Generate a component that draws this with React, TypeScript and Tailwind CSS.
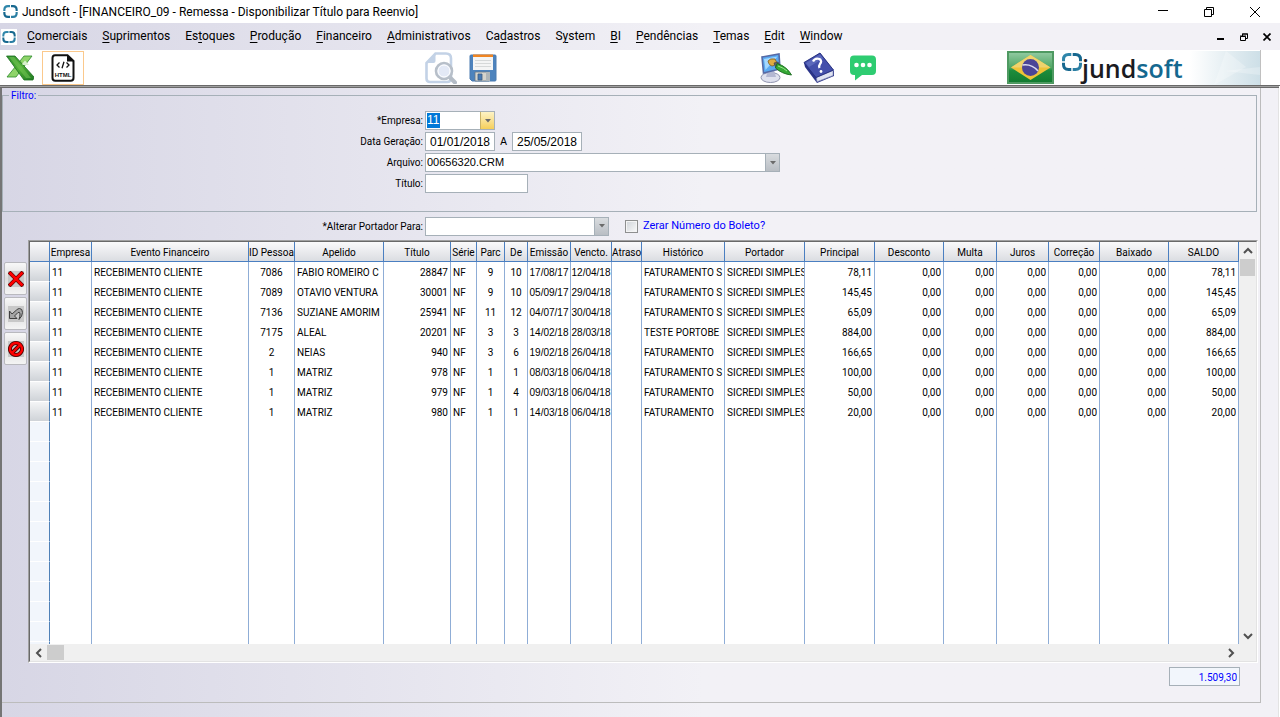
import { useState } from "react";
import type { ReactNode } from "react";

type Align = "left" | "center" | "right";

const alignClass: Record<Align, string> = {
  left: "pl-[2px] text-left",
  center: "text-center",
  right: "px-[2px] text-right",
};

const columns: { title: string; width: string; align: Align; date?: boolean }[] = [
  { title: "Empresa", width: "w-[42px]", align: "left" },
  { title: "Evento Financeiro", width: "w-[157px]", align: "left" },
  { title: "ID Pessoa", width: "w-[46px]", align: "center" },
  { title: "Apelido", width: "w-[89px]", align: "left" },
  { title: "Título", width: "w-[67px]", align: "right" },
  { title: "Série", width: "w-[26px]", align: "left" },
  { title: "Parc", width: "w-[28px]", align: "center" },
  { title: "De", width: "w-[23px]", align: "center" },
  { title: "Emissão", width: "w-[43px]", align: "center", date: true },
  { title: "Vencto.", width: "w-[41px]", align: "center", date: true },
  { title: "Atraso", width: "w-[30px]", align: "left" },
  { title: "Histórico", width: "w-[83px]", align: "left" },
  { title: "Portador", width: "w-[80px]", align: "left" },
  { title: "Principal", width: "w-[70px]", align: "right" },
  { title: "Desconto", width: "w-[69px]", align: "right" },
  { title: "Multa", width: "w-[53px]", align: "right" },
  { title: "Juros", width: "w-[52px]", align: "right" },
  { title: "Correção", width: "w-[51px]", align: "right" },
  { title: "Baixado", width: "w-[69px]", align: "right" },
  { title: "SALDO", width: "w-[70px]", align: "right" },
];

const titulos = [
  ["7086", "FABIO ROMEIRO C", "28847", "9", "10", "17/08/17", "12/04/18", "FATURAMENTO S", "78,11"],
  ["7089", "OTAVIO VENTURA", "30001", "9", "10", "05/09/17", "29/04/18", "FATURAMENTO S", "145,45"],
  ["7136", "SUZIANE AMORIM", "25941", "11", "12", "04/07/17", "30/04/18", "FATURAMENTO S", "65,09"],
  ["7175", "ALEAL", "20201", "3", "3", "14/02/18", "28/03/18", "TESTE PORTOBE", "884,00"],
  ["2", "NEIAS", "940", "3", "6", "19/02/18", "26/04/18", "FATURAMENTO", "166,65"],
  ["1", "MATRIZ", "978", "1", "1", "08/03/18", "06/04/18", "FATURAMENTO S", "100,00"],
  ["1", "MATRIZ", "979", "1", "4", "09/03/18", "06/04/18", "FATURAMENTO", "50,00"],
  ["1", "MATRIZ", "980", "1", "1", "14/03/18", "06/04/18", "FATURAMENTO", "20,00"],
];

const rows = titulos.map(([id, apelido, titulo, parc, de, emissao, vencto, historico, valor]) => [
  "11", "RECEBIMENTO CLIENTE", id, apelido, titulo, "NF", parc, de, emissao, vencto, "",
  historico, "SICREDI SIMPLES", valor, "0,00", "0,00", "0,00", "0,00", "0,00", valor,
]);

const emptyRows = Array.from({ length: 40 });

// [before, hotkey, after]
const menus = [
  ["", "C", "omerciais"],
  ["", "S", "uprimentos"],
  ["Es", "t", "oques"],
  ["", "P", "rodução"],
  ["", "F", "inanceiro"],
  ["", "A", "dministrativos"],
  ["Ca", "d", "astros"],
  ["S", "y", "stem"],
  ["", "B", "I"],
  ["", "P", "endências"],
  ["", "T", "emas"],
  ["", "E", "dit"],
  ["", "W", "indow"],
];

function LogoMark({ className }: { className: string }) {
  return (
    <svg viewBox="0 0 20 18" className={className} fill="none" strokeWidth="3">
      <path d="M9.300 1.500H6.500Q1.500 1.500 1.500 6.500V8.300" stroke="#2f86aa" />
      <path d="M10.700 1.500H13.500Q18.500 1.500 18.500 6.500V8.300" stroke="#17688f" />
      <path d="M9.300 16.500H6.500Q1.500 16.500 1.500 11.500V9.700" stroke="#17688f" />
      <path d="M10.700 16.500H13.500Q18.500 16.500 18.500 11.500V9.700" stroke="#2a7ea3" />
    </svg>
  );
}

function ExcelIcon() {
  return (
    <svg viewBox="0 0 28 26" className="h-[26px] w-7">
      <defs>
        <linearGradient id="xl" x1="0" y1="0" x2="1" y2="1">
          <stop offset="0" stopColor="#2f8f2f" />
          <stop offset="0.5" stopColor="#4fae35" />
          <stop offset="1" stopColor="#1f7a22" />
        </linearGradient>
      </defs>
      <path d="M18 1h8L10 22H1Z" fill="#8fd46a" stroke="#2b8a2b" strokeWidth="0.8" />
      <path d="M0.5 1H9L28 22l-1 3H18Z" fill="url(#xl)" stroke="#1b6e20" strokeWidth="0.8" />
      <path d="M3 2h5l17 21h-5Z" fill="#7cc95a" opacity="0.5" />
      <path d="M16 9l3-3.500 4 4.500h-6Z" fill="#d8f0cc" />
    </svg>
  );
}

function HtmlIcon() {
  return (
    <svg viewBox="0 0 24 28" className="h-7 w-6">
      <path d="M4 1.200H16.500L22.500 7V24q0 2.800-2.800 2.800H4.300Q1.500 26.800 1.500 24V4Q1.500 1.200 4 1.200Z" fill="#fff" stroke="#111" strokeWidth="2" />
      <path d="M16 1v6.500h6.500Z" fill="#111" />
      <path d="M8.500 8.500 6 11l2.500 2.500M15.500 8.500 18 11l-2.500 2.500M13 7.800l-2 6.400" fill="none" stroke="#111" strokeWidth="1.300" />
      <text x="12" y="22.500" textAnchor="middle" fontSize="6" fontWeight="700" fontFamily="Liberation Sans, sans-serif" fill="#111">
        HTML
      </text>
    </svg>
  );
}

function PreviewIcon() {
  return (
    <svg viewBox="0 0 32 32" className="size-8">
      <path d="M10.500 1.500H21q5 0 5 5V26q0 4-4 4H5q-3.500 0-3.500-3.500V11Z" fill="#fff" stroke="#c3d2e6" strokeWidth="2.600" />
      <path d="M1 11 10.500 1v8q0 2-2 2Z" fill="#c3d2e6" />
      <path d="m24.500 25 5.500 5.500" stroke="#b4bcc6" strokeWidth="4" strokeLinecap="round" />
      <circle cx="19" cy="19" r="8" fill="#e3e9f6" stroke="#b7bfc9" strokeWidth="2.600" />
      <circle cx="19" cy="19" r="6" fill="none" stroke="#fff" strokeWidth="1" />
    </svg>
  );
}

function SaveIcon() {
  return (
    <svg viewBox="0 0 28 28" className="size-7">
      <path d="M1 2q0-1 1-1H26q1 0 1 1V26q0 1-1 1H3l-2-2Z" fill="#4d83bd" stroke="#4a7ab0" />
      <path d="M4 1h20v15H4Z" fill="#f4f5f5" />
      <path d="M4 0.500h20v2.500H4Z" fill="#f08522" />
      <path d="M6 6.500h16M6 9.500h16M6 12.500h16" stroke="#d6d9d9" />
      <path d="M6 18h14v9H6Z" fill="#d4d3cc" stroke="#62768c" strokeWidth="0.800" />
      <path d="M9 20h4v6H9Z" fill="#4679b4" stroke="#3b5d84" strokeWidth="0.800" />
      <path d="M17 18h4v9h-4Z" fill="#aeb5b8" />
    </svg>
  );
}

function ThemeIcon() {
  return (
    <svg viewBox="0 0 32 30" className="h-[30px] w-8">
      <ellipse cx="10.500" cy="24.500" rx="9.500" ry="5" fill="#dfe1ee" stroke="#8f93ae" />
      <path d="M8 17h6l2 7H6Z" fill="#b4b8d2" />
      <path d="M2 4 19 1l1 15L3.500 20Z" fill="#5aaaf2" stroke="#566aa6" strokeWidth="1.600" />
      <path d="M4 6 17.500 3.500 5.500 17Z" fill="#a4d8ff" />
      <path d="M8 8q2-3 7-2l2 4-4 3q-4 0-5-5Z" fill="#e0ad42" stroke="#7e5a22" strokeWidth="0.800" />
      <path d="m14 10 4-1 2 4-4 2Z" fill="#5f6270" stroke="#444" strokeWidth="0.700" />
      <path d="M17 10.500Q27 13.500 31.500 22 22 21 15.500 15Z" fill="#35a835" stroke="#176a1c" strokeWidth="0.900" />
      <path d="M18 13q6 2 9 5" stroke="#9be88d" fill="none" />
    </svg>
  );
}

function HelpIcon() {
  return (
    <svg viewBox="0 0 32 32" className="size-8">
      <path d="M1 11 2 15 14 31 31 24V19L17 1Z" fill="#2a3389" />
      <path d="M13.500 25.500 30 18.500v5L14 29.800Z" fill="#dfe3f2" stroke="#8990b8" strokeWidth="0.700" />
      <path d="M1 10.500 17 1 30.500 18 13 25.500Z" fill="#4450ab" stroke="#26307e" strokeWidth="0.900" />
      <path d="M3 11 17 2.500l3 4L6 15Z" fill="#6d79c8" opacity="0.600" />
      <path d="M10 9.500q2-4 6.500-2.500 3 2 0.500 5-1.500 2-0.500 4" fill="none" stroke="#fff" strokeWidth="2.300" />
      <circle cx="18" cy="19.500" r="1.400" fill="#fff" />
    </svg>
  );
}

function ChatIcon() {
  return (
    <svg viewBox="0 0 26 26" className="size-[26px]">
      <path d="M4 0.500H22q4 0 4 4V16q0 4-4 4H12L5 25.500V20H4q-4 0-4-4V4.500Q0 0.500 4 0.500Z" fill="#2ecc71" />
      <circle cx="6.500" cy="10" r="2.300" fill="#fff" />
      <circle cx="13" cy="10" r="2.300" fill="#fff" />
      <circle cx="19.500" cy="10" r="2.300" fill="#fff" />
    </svg>
  );
}

function BrazilFlag() {
  return (
    <svg viewBox="0 0 47 33" className="h-[33px] w-[47px]">
      <defs>
        <linearGradient id="flag" x1="0" y1="0" x2="0" y2="1">
          <stop offset="0" stopColor="#93cba3" />
          <stop offset="0.500" stopColor="#4fa765" />
          <stop offset="0.600" stopColor="#1d8c3c" />
          <stop offset="1" stopColor="#117a30" />
        </linearGradient>
      </defs>
      <path d="M1 1h45v31H1Z" fill="url(#flag)" stroke="#4f9a62" strokeWidth="2" />
      <path d="M23.500 4 43.500 16.500 23.500 29 4 16.500Z" fill="#eec338" />
      <path d="M23.500 4 43.500 16.500H4Z" fill="#efd36d" />
      <circle cx="23.500" cy="16.500" r="8.500" fill="#4b4597" />
      <path d="M15.500 14q9-1.500 15.500 6" stroke="#dcdcf0" strokeWidth="1.500" fill="none" />
    </svg>
  );
}

function Chevron({ d }: { d: string }) {
  return (
    <svg viewBox="0 0 10 10" className="size-[10px]" fill="none" stroke="#505050" strokeWidth="2">
      <path d={d} />
    </svg>
  );
}

function ComboArrow({ hot = false }: { hot?: boolean }) {
  return (
    <span
      className={`flex w-[14px] shrink-0 items-center justify-center self-stretch border-l ${
        hot
          ? "border-[#c9b36a] bg-linear-to-b from-[#fdf3c4] to-[#f5cf58]"
          : "border-[#a6b0b8] bg-linear-to-b from-[#d9dcdf] to-[#b9bec4]"
      }`}
    >
      <svg viewBox="0 0 6 4" className="h-1 w-[6px]">
        <path d="M0 0h6L3 3.500Z" fill="#6b6b6b" />
      </svg>
    </span>
  );
}

function ToolButton({ label, className = "", children }: { label: string; className?: string; children: ReactNode }) {
  return (
    <button type="button" aria-label={label} className={`flex shrink-0 items-center justify-center ${className}`}>
      {children}
    </button>
  );
}

function SideButton({ label, children }: { label: string; children: ReactNode }) {
  return (
    <button
      type="button"
      aria-label={label}
      className="flex h-[33px] w-[23px] items-center justify-center rounded-[2px] border border-[#b9b9be] bg-linear-to-b from-[#f8f8f8] via-[#dedede] to-[#f4f4f4]"
    >
      <span className="flex size-4 items-center justify-center bg-[#c8c8c8]">{children}</span>
    </button>
  );
}

const field = "h-[19px] border border-[#a6b0b8] bg-white";
const label = "pr-[2px] text-right font-['Roboto','Liberation_Sans',sans-serif] text-[10px] leading-[19px]";

function Filtro() {
  const [de, setDe] = useState("01/01/2018");
  const [ate, setAte] = useState("25/05/2018");
  const [titulo, setTitulo] = useState("");

  return (
    <fieldset className="mr-[3px] h-[124px] min-w-0 border border-[#a6b0b8]">
      <legend className="ml-[6px] h-[14px] px-[2px] font-['Roboto','Liberation_Sans',sans-serif] text-[10px] leading-[16px] text-[#0000ff]">
        Filtro:
      </legend>
      <div className="grid grid-cols-[422px_1fr] gap-y-[2px] pt-[9px]">
        <label htmlFor="empresa" className={label}>*Empresa:</label>
        <div className={`${field} flex w-[70px] items-center`}>
          <select
            id="empresa"
            className="ml-px h-[15px] w-[13px] appearance-none bg-[#0078d7] text-[12px] leading-[15px] text-white outline-none"
          >
            <option>11</option>
          </select>
          <span className="flex-1" />
          <ComboArrow hot />
        </div>

        <label htmlFor="de" className={label}>Data Geração:</label>
        <div className="flex items-center">
          <input id="de" value={de} onChange={(e) => setDe(e.target.value)} className={`${field} w-[70px] text-center text-[12px]`} />
          <label htmlFor="ate" className="w-[17px] text-center text-[10px]">A</label>
          <input id="ate" value={ate} onChange={(e) => setAte(e.target.value)} className={`${field} w-[70px] text-center text-[12px]`} />
        </div>

        <label htmlFor="arquivo" className={label}>Arquivo:</label>
        <div className={`${field} flex w-[355px]`}>
          <select id="arquivo" className="min-w-0 flex-1 appearance-none pl-px text-[11px] leading-[17px] outline-none">
            <option>00656320.CRM</option>
          </select>
          <ComboArrow />
        </div>

        <label htmlFor="titulo" className={label}>Título:</label>
        <input id="titulo" value={titulo} onChange={(e) => setTitulo(e.target.value)} className={`${field} w-[103px] px-1 text-[11px]`} />
      </div>
    </fieldset>
  );
}

function Grade() {
  return (
    <div className="flex min-h-0 min-w-0 flex-1 border border-t-[#a0a0a0] border-r-white border-b-white border-l-[#a0a0a0]">
      <div className="flex min-w-0 flex-1 flex-col border border-t-[#696969] border-r-[#e3e3e3] border-b-[#e3e3e3] border-l-[#696969] bg-white">
        <div className="flex min-h-0 flex-1">
          <div className="min-w-0 flex-1 overflow-hidden">
            <table className="w-full table-fixed border-separate border-spacing-0 font-['Roboto','Liberation_Sans',sans-serif] text-[10px] whitespace-nowrap">
              <thead>
                <tr className="h-5 bg-linear-to-b from-[#fafafb] to-[#d9dbe0]">
                  <th className="w-5 border-r border-b border-[#4a7fc1] p-0" />
                  {columns.map((c) => (
                    <th key={c.title} className={`${c.width} border-r border-b border-[#4a7fc1] p-0 text-center font-normal`}>
                      <div className="h-[19px] leading-[21px]">{c.title}</div>
                    </th>
                  ))}
                </tr>
              </thead>
              <tbody>
                {rows.map((row, i) => (
                  <tr key={i} className="h-5">
                    <td className="border-r border-b border-r-[#4f81b8] border-b-white bg-linear-to-b from-[#f4f5f6] to-[#cfd3d8] p-0" />
                    {row.map((value, j) => (
                      <td
                        key={j}
                        className={`border-r border-[#8fadd6] py-0 ${alignClass[columns[j].align]} ${
                          columns[j].date ? "font-['Liberation_Sans',sans-serif]" : ""
                        }`}
                      >
                        <div className="h-5 overflow-hidden leading-[22px]">{value}</div>
                      </td>
                    ))}
                  </tr>
                ))}
                {emptyRows.map((_, i) => (
                  <tr key={i} className="h-5">
                    <td className="border-r border-b border-r-[#4f81b8] border-b-white bg-[#f2f6fc] p-0" />
                    {columns.map((c) => (
                      <td key={c.title} className="border-r border-[#8fadd6] p-0" />
                    ))}
                  </tr>
                ))}
              </tbody>
            </table>
          </div>
          <div className="flex w-[17px] flex-col items-center bg-[#f0f0f0]">
            <button type="button" aria-label="Rolar para cima" className="flex h-[17px] items-center">
              <Chevron d="M1 7l4-4 4 4" />
            </button>
            <div className="h-[17px] w-[15px] bg-[#cdcdcd]" />
            <button type="button" aria-label="Rolar para baixo" className="mt-auto flex h-[17px] items-center">
              <Chevron d="M1 3l4 4 4-4" />
            </button>
          </div>
        </div>
        <div className="flex h-[17px] items-center bg-[#f0f0f0] pr-[17px]">
          <button type="button" aria-label="Rolar para a esquerda" className="flex w-[17px] justify-center">
            <Chevron d="M7 1L3 5l4 4" />
          </button>
          <div className="h-[15px] w-[17px] bg-[#cdcdcd]" />
          <button type="button" aria-label="Rolar para a direita" className="ml-auto flex w-[17px] justify-center">
            <Chevron d="M3 1l4 4-4 4" />
          </button>
        </div>
      </div>
    </div>
  );
}

export default function App() {
  const [zerar, setZerar] = useState(false);

  return (
    <div className="flex h-screen flex-col overflow-hidden bg-white font-['Liberation_Sans',sans-serif] text-black">
      <header className="flex h-[23px] shrink-0 items-center pl-[3px]">
        <LogoMark className="h-[13px] w-[15px]" />
        <h1 className="ml-1 flex-1 font-['Roboto','Noto_Sans',sans-serif] text-[12px]">
          Jundsoft - [FINANCEIRO_09 - Remessa - Disponibilizar Título para Reenvio]
        </h1>
        <div className="flex gap-9 pr-5">
          <button type="button" aria-label="Minimizar">
            <svg viewBox="0 0 10 10" className="size-[10px]" stroke="#000"><path d="M0 3.500h10" /></svg>
          </button>
          <button type="button" aria-label="Restaurar">
            <svg viewBox="0 0 10 10" className="size-[10px]" stroke="#000" fill="none">
              <path d="M0.500 2.500h7v7h-7ZM2.500 2.500v-2h7v7h-2" />
            </svg>
          </button>
          <button type="button" aria-label="Fechar">
            <svg viewBox="0 0 10 10" className="size-[10px]" stroke="#000"><path d="M0 0l10 10M10 0L0 10" /></svg>
          </button>
        </div>
      </header>

      <nav className="flex h-[27px] shrink-0 items-center bg-linear-to-r from-[#d7d6e5] to-[#f2f1f6] to-55% pl-px">
        <span className="bg-white px-px py-[2px]">
          <LogoMark className="h-3 w-[14px]" />
        </span>
        <ul className="ml-[10px] flex flex-1 gap-[15px] pb-px font-['Roboto','Noto_Sans',sans-serif] text-[12px]">
          {menus.map(([before, key, after]) => (
            <li key={before + key + after}>
              <a href="#">
                {before}
                <span className="underline underline-offset-2">{key}</span>
                {after}
              </a>
            </li>
          ))}
        </ul>
        <div className="flex items-center gap-[15px] pr-[9px]">
          <button type="button" aria-label="Minimizar janela">
            <svg viewBox="0 0 8 8" className="size-2" stroke="#000" strokeWidth="2"><path d="M0 6h7" /></svg>
          </button>
          <button type="button" aria-label="Restaurar janela">
            <svg viewBox="0 0 8 8" className="size-2" stroke="#000" fill="none">
              <path d="M0.500 3.500h5v4h-5ZM0 3h6M2.500 3V1h5v4.500H6M2 1h6" />
            </svg>
          </button>
          <button type="button" aria-label="Fechar janela">
            <svg viewBox="0 0 8 8" className="size-2" stroke="#000" strokeWidth="1.700"><path d="M0.500 0.500l7 7M7.500 0.500l-7 7" /></svg>
          </button>
        </div>
      </nav>

      <div className="flex h-[35px] shrink-0 items-center">
        <ToolButton label="Exportar Excel" className="ml-[6px]"><ExcelIcon /></ToolButton>
        <ToolButton label="Exportar HTML" className="ml-2 h-[34px] w-[42px] border border-[#fbc98c]"><HtmlIcon /></ToolButton>
        <div className="flex flex-1 items-center justify-end gap-3">
          <ToolButton label="Visualizar"><PreviewIcon /></ToolButton>
          <ToolButton label="Salvar"><SaveIcon /></ToolButton>
        </div>
        <div className="flex w-[379px] items-center justify-end gap-[11px]">
          <ToolButton label="Temas"><ThemeIcon /></ToolButton>
          <ToolButton label="Ajuda"><HelpIcon /></ToolButton>
          <ToolButton label="Chat" className="ml-1"><ChatIcon /></ToolButton>
        </div>
        <div className="ml-[131px] flex h-full w-[254px] items-center border-r border-[#c0c0c0]">
          <BrazilFlag />
          <LogoMark className="mb-3 ml-2 h-[18px] w-5" />
          <span className="flex-1 font-['Open_Sans',sans-serif] text-[25px] leading-[34px] font-semibold text-[#1b1b1f]">
            jund<span className="text-[#14688f]">soft</span>
          </span>
          <svg viewBox="0 0 70 34" className="h-[34px] w-[70px]">
            <defs>
              <linearGradient id="fade">
                <stop offset="0" stopColor="#fff" />
                <stop offset="1" stopColor="#cddfe7" />
              </linearGradient>
            </defs>
            <path d="M0 0h70v34H0Z" fill="url(#fade)" />
            <path d="M24 34 36 0l20 16Z" fill="#fff" opacity="0.250" />
            <path d="M34 20 70 16v8Z" fill="#fff" opacity="0.250" />
          </svg>
        </div>
        <div className="w-[19px]" />
      </div>

      <div className="flex min-h-0 flex-1 flex-col border-t border-[#696969] pr-px">
        <div className="h-[2px] shrink-0 border-b border-[#696969] bg-[#a0a0a0]" />
        <main className="flex min-h-0 flex-1 border-r border-l-2 border-r-[#e3e3e3] border-l-[#757575] bg-linear-to-r from-[#d7d6e5] to-[#f2f1f6] to-55% pr-[17px] pb-[14px]">
          <div className="flex min-w-0 flex-1 flex-col border-r border-b border-[#bcbcbc]">
            <Filtro />
            <div className="grid h-7 shrink-0 grid-cols-[423px_1fr] items-center">
              <label htmlFor="portador" className={label}>*Alterar Portador Para:</label>
              <div className="flex items-center">
                <div className={`${field} flex w-[184px]`}>
                  <select id="portador" className="min-w-0 flex-1 appearance-none text-[11px] outline-none">
                    <option></option>
                  </select>
                  <ComboArrow />
                </div>
                <input
                  id="zerar"
                  type="checkbox"
                  checked={zerar}
                  onChange={(e) => setZerar(e.target.checked)}
                  className="ml-4 size-[13px] appearance-none border border-[#8e8f8f] bg-linear-to-br from-[#cfd3d8] to-[#fafafa] shadow-[inset_0_0_0_1px_#f4f4f4] checked:bg-[#4a7fc1]"
                />
                <label htmlFor="zerar" className="pt-px pl-[5px] font-['Roboto','Liberation_Sans',sans-serif] text-[11px] text-[#0000ff]">
                  Zerar Número do Boleto?
                </label>
              </div>
            </div>
            <div className="flex min-h-0 flex-1 pr-[2px]">
              <div className="flex w-[26px] shrink-0 flex-col gap-[2px] pt-[22px] pl-[2px]">
                <SideButton label="Excluir">
                  <svg viewBox="0 0 16 16" className="size-4">
                    <path d="M1 1l14 14M15 1L1 15" stroke="#5a0000" strokeWidth="4" />
                    <path d="M1.500 1.500l13 13M14.500 1.500l-13 13" stroke="#f00" strokeWidth="2.600" />
                  </svg>
                </SideButton>
                <SideButton label="Desfazer">
                  <svg viewBox="0 0 14 12" className="h-3 w-[14px]" fill="#a5a5a5" stroke="#3f3f3f" strokeWidth="1">
                    <path d="M0.500 3v7.500h7.500L5.500 8 9 4.500q2-1 2 1.500 0 2.500-1 5.500 3.500-3.500 3.500-7 0-4-3-4-1.500 0-3 1.500L3 6Z" />
                  </svg>
                </SideButton>
                <SideButton label="Cancelar">
                  <svg viewBox="0 0 16 16" className="size-4" fill="none">
                    <path d="M8 2a6 6 0 1 0 .01 0M4 12l8-8" stroke="#4a0000" strokeWidth="4" />
                    <path d="M8 2a6 6 0 1 0 .01 0M4 12l8-8" stroke="#f00" strokeWidth="2.400" />
                  </svg>
                </SideButton>
              </div>
              <Grade />
            </div>
            <div className="flex h-[39px] shrink-0 justify-end pt-1 pr-5">
              <input
                aria-label="Total do saldo"
                readOnly
                value="1.509,30"
                className="h-[19px] w-[71px] border border-[#a6b0b8] bg-[#f2f6fc] px-[2px] pt-px text-right font-['Roboto','Liberation_Sans',sans-serif] text-[10px] text-[#0000ff]"
              />
            </div>
          </div>
        </main>
      </div>
    </div>
  );
}
